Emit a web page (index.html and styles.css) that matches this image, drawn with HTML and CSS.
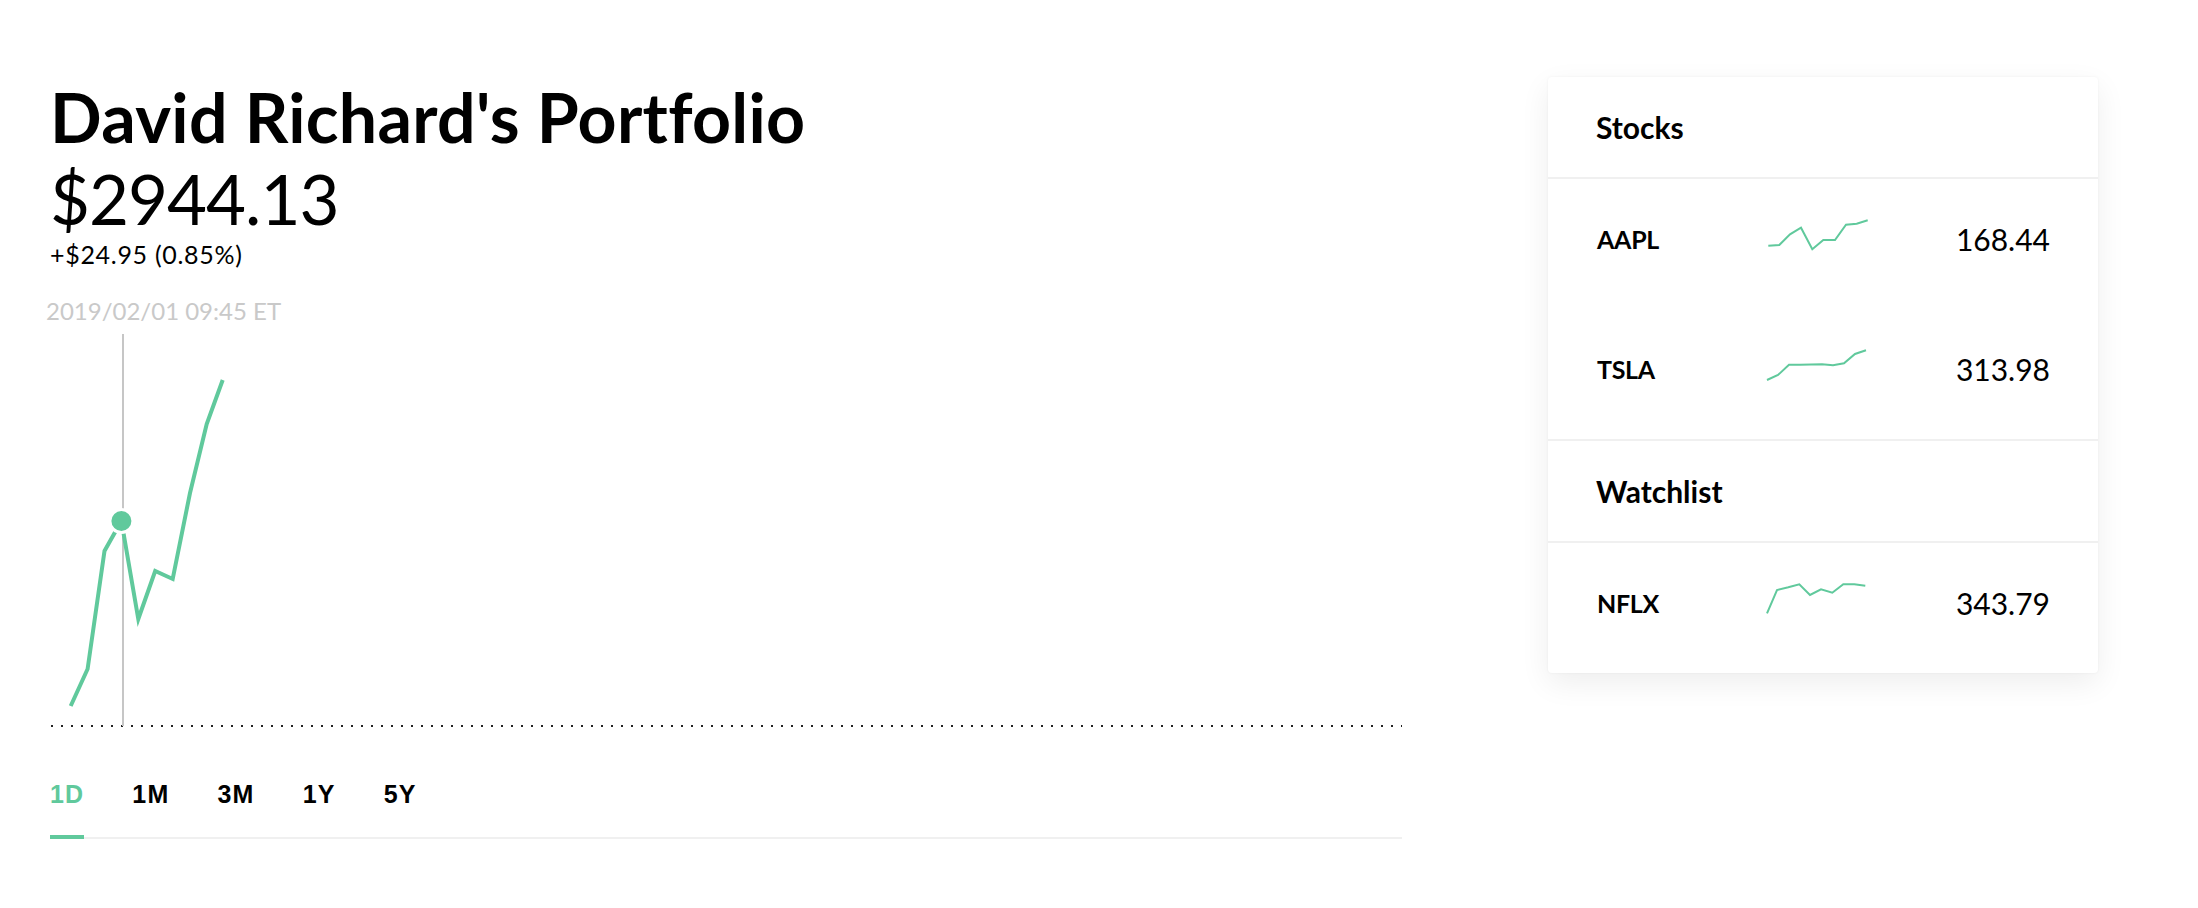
FILE: index.html
```html
<!DOCTYPE html>
<html lang="en">
<head>
<meta charset="utf-8">
<title>David Richard's Portfolio</title>
<link rel="stylesheet" href="styles.css">
</head>
<body>
<div class="page">
  <main class="portfolio">
    <h1 class="title">David Richard's Portfolio</h1>
    <div class="balance">$2944.13</div>
    <div class="change">+$24.95 (0.85%)</div>
    <div class="timestamp">2019/02/01 09:45 ET</div>
    <svg class="chart" width="1352" height="405" viewBox="0 0 1352 405">
      <line class="chart-base" x1="1" y1="400" x2="1352" y2="400"/>
      <line class="chart-cursor" x1="73" y1="8" x2="73" y2="400"/>
      <polyline class="chart-line" points="20.7,380 37.6,343 54.5,225 71.4,195 88.3,293 105.2,245 122.7,253 140,167 156.7,98 172.7,54"/>
      <circle class="chart-dot" cx="71.4" cy="195" r="11.5"/>
    </svg>
    <nav class="ranges">
      <span class="range range-active">1D</span>
      <span class="range">1M</span>
      <span class="range">3M</span>
      <span class="range">1Y</span>
      <span class="range">5Y</span>
    </nav>
  </main>
  <aside class="card">
    <section class="group">
      <h2 class="group-title">Stocks</h2>
      <div class="row">
        <span class="symbol">AAPL</span>
        <svg class="spark" width="102" height="32" viewBox="0 0 102 32"><polyline points="1.3,26.7 12.3,26 23,15.3 34,8.7 45.3,30.3 56.3,21 68,21 79,5.7 89.7,4.7 100.7,1.3"/></svg>
        <span class="price">168.44</span>
      </div>
      <div class="row">
        <span class="symbol">TSLA</span>
        <svg class="spark" width="102" height="32" viewBox="0 0 102 32"><polyline points="0,31 11,26 22,15.7 33,15.7 44,15.5 55,15.3 66,16.3 77,14.3 88,5 99,1.3"/></svg>
        <span class="price">313.98</span>
      </div>
    </section>
    <section class="group">
      <h2 class="group-title">Watchlist</h2>
      <div class="row">
        <span class="symbol">NFLX</span>
        <svg class="spark" width="102" height="32" viewBox="0 0 102 32"><polyline points="0,30.3 10,7 21.3,4.3 32.3,1.3 43,12 54,6.3 65.3,9.7 76.3,1.3 87.3,1.3 98.3,2.7"/></svg>
        <span class="price">343.79</span>
      </div>
    </section>
  </aside>
</div>
</body>
</html>
```
FILE: styles.css
```css
* {
  box-sizing: border-box;
}

html, body {
  margin: 0;
  padding: 0;
  background: #ffffff;
}

body {
  font-family: "Lato", "Open Sans", sans-serif;
  font-variant-ligatures: none;
  color: #000000;
}

.page {
  display: flex;
  align-items: flex-start;
  gap: 146px;
  padding: 76px 100px 0 50px;
}

.portfolio {
  flex: 1;
  display: flex;
  flex-direction: column;
  min-width: 0;
}

.title {
  margin: 0;
  font-size: 68px;
  font-weight: 700;
  line-height: 1.2;
  letter-spacing: 0.3px;
}

.balance {
  font-size: 69px;
  font-weight: 400;
  line-height: 1.2;
  letter-spacing: -1px;
}

.change {
  font-size: 25px;
  line-height: 28.8px;
  letter-spacing: 0.7px;
}

.timestamp {
  margin-top: 28px;
  margin-left: -4px;
  font-size: 24px;
  line-height: 1.2;
  color: #c9c9c9;
}

.chart {
  display: block;
  overflow: visible;
}

.chart-base {
  stroke: #222222;
  stroke-width: 2;
  stroke-dasharray: 2 8;
}

.chart-cursor {
  stroke: #c6c6c6;
  stroke-width: 2;
}

.chart-line {
  fill: none;
  stroke: #60c99c;
  stroke-width: 4;
  stroke-linejoin: miter;
}

.chart-dot {
  fill: #60c99c;
  stroke: #ffffff;
  stroke-width: 3;
}

.ranges {
  display: flex;
  gap: 48px;
  margin-top: 49px;
  border-bottom: 2px solid #f0f0f0;
}

.range {
  font-family: "Liberation Sans", Arial, sans-serif;
  font-size: 25px;
  font-weight: 700;
  letter-spacing: 1.2px;
  line-height: 28px;
  padding-bottom: 27px;
  border-bottom: 4px solid transparent;
  margin-bottom: -2px;
}

.range-active {
  color: #60c99c;
  border-bottom-color: #60c99c;
}

.card {
  flex: 0 0 550px;
  margin-top: 1px;
  background: #ffffff;
  border-radius: 4px;
  box-shadow: 0 10px 30px rgba(0, 0, 0, 0.07), 0 0 3px rgba(0, 0, 0, 0.05);
}

.group + .group {
  border-top: 2px solid #f0f0f0;
}

.group-title {
  margin: 0;
  height: 102px;
  display: flex;
  align-items: center;
  padding: 0 48px;
  font-size: 30px;
  font-weight: 700;
  line-height: 1.2;
  border-bottom: 2px solid #f0f0f0;
}

.row {
  height: 130px;
  display: grid;
  grid-template-columns: 170px 102px 1fr;
  align-items: center;
  padding: 0 48px 10px 49px;
}

.symbol {
  font-size: 25px;
  font-weight: 700;
  line-height: 1.2;
  letter-spacing: -0.3px;
}

.spark {
  display: block;
  overflow: visible;
  margin-bottom: 8px;
}

.spark polyline {
  fill: none;
  stroke: #60c99c;
  stroke-width: 2;
}

.price {
  text-align: right;
  font-size: 30px;
  font-weight: 400;
  line-height: 1.2;
}
```
